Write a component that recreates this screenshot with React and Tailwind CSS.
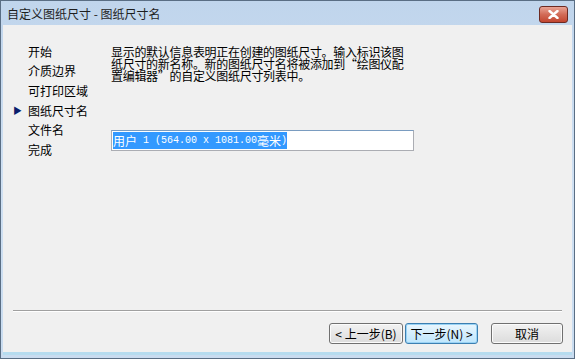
import React from 'react';

const font = { fontFamily: '"Noto Sans CJK SC", "Liberation Sans", sans-serif' };
const mono = { fontFamily: '"Liberation Mono", monospace' };

const steps = ['开始', '介质边界', '可打印区域', '图纸尺寸名', '文件名', '完成'];

function Button({ children, focused, className = '' }) {
  return (
    <button
      className={`h-[21px] rounded-[3px] border text-[12px] leading-none text-black flex items-center justify-center bg-gradient-to-b ${
        focused
          ? 'border-[#3c7fb1] from-[#eaf6fd] to-[#bee6fd] shadow-[inset_0_0_0_1px_#9ad3f5]'
          : 'border-[#707070] from-[#f2f2f2] to-[#dcdcdc] shadow-[inset_0_0_0_1px_#fbfbfb]'
      } ${className}`}
    >
      {children}
    </button>
  );
}

export default function App() {
  return (
    <div
      className="w-[575px] h-[359px] flex flex-col bg-gradient-to-b from-[#c0d5ec] via-[#cfe0f2] to-[#c9dcf0] border border-[#5a6e84] overflow-hidden"
      style={font}
    >
      {/* Title bar */}
      <div className="h-[24px] flex items-center justify-between pl-[6px] pr-[6px] shrink-0">
        <span className="text-[12px] text-[#1e1e1e] leading-none mt-[1px]">自定义图纸尺寸 - 图纸尺寸名</span>
        <div className="w-[29px] h-[17px] mt-[2px] rounded-[3px] border border-[#6d2a22] bg-gradient-to-b from-[#e8a395] via-[#d26b57] to-[#c2452f] flex items-center justify-center">
          <svg width="11" height="9" viewBox="0 0 11 9">
            <path d="M1.5 1 L9.5 8 M9.5 1 L1.5 8" stroke="#ffffff" strokeWidth="2.4" strokeLinecap="round" />
          </svg>
        </div>
      </div>

      {/* Client area */}
      <div className="flex-1 mx-[2px] mb-[3px] bg-[#f0f0f0] flex flex-col border-b-[3px] border-b-[#b6dcef]">
        <div className="flex-1 flex">
          {/* Nav */}
          <div className="w-[108px] pt-[17px] pl-[10px] text-[12px] text-black">
            {steps.map((s) => (
              <div key={s} className="h-[19.6px] flex items-center">
                <span className="w-[15px] text-[9px] text-[#0a1d6c] leading-none">
                  {s === '图纸尺寸名' ? '▶' : ''}
                </span>
                <span className="leading-none">{s}</span>
              </div>
            ))}
          </div>

          {/* Content */}
          <div className="flex-1 pt-[21px] pr-[20px]">
            <p className="w-[302px] text-[12px] leading-[12px] text-black tracking-[-0.3px]">
              显示的默认信息表明正在创建的图纸尺寸。输入标识该图纸尺寸的新名称。新的图纸尺寸名将被添加到“绘图仪配置编辑器”的自定义图纸尺寸列表中。
            </p>
            <div className="mt-[48px] w-[303px] h-[21px] border border-[#abadb3] border-t-[#7a9cc0] bg-white flex items-center px-[1px]">
              <span className="bg-[#3399ff] text-white text-[12px] leading-[17px] whitespace-pre flex items-center">
                <span>用户</span>
                <span className="text-[10px]" style={mono}> 1 (564.00 x 1081.00</span>
                <span>毫米</span>
                <span className="text-[10px]" style={mono}>)</span>
              </span>
            </div>
          </div>
        </div>

        {/* Separator */}
        <div className="mx-[10px] h-[2px] border-t border-t-[#a0a0a0] border-b border-b-white" />

        {/* Buttons */}
        <div className="h-[40px] flex items-start justify-end pt-[11px] pr-[9px]">
          <Button className="w-[74px]">&lt; 上一步(B)</Button>
          <Button focused className="w-[73px] ml-[2px]">下一步(N) &gt;</Button>
          <Button className="w-[72px] ml-[13px]">取消</Button>
        </div>
      </div>
    </div>
  );
}
